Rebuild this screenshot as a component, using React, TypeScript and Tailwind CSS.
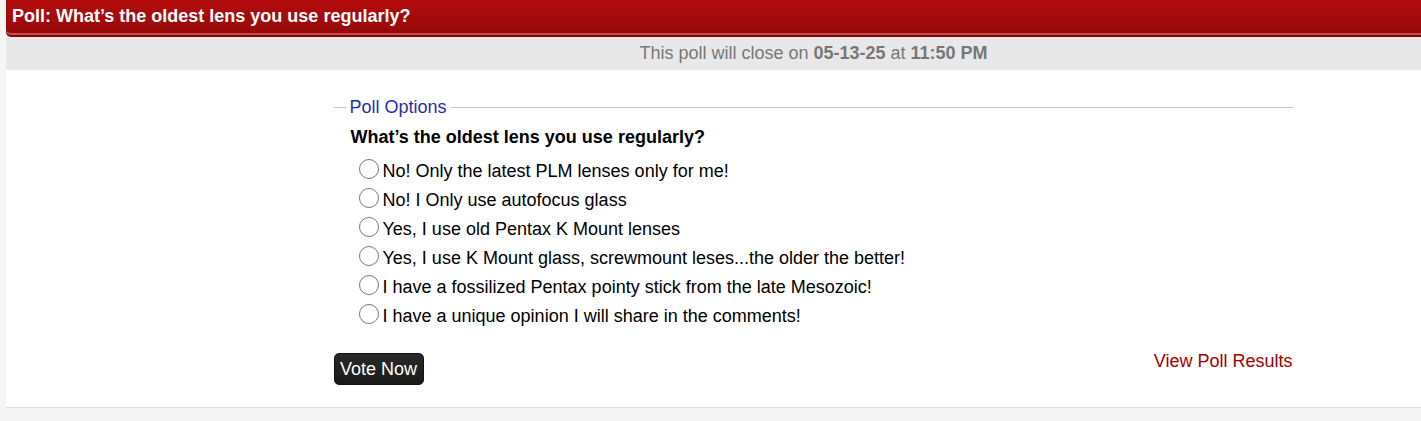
const options = [
  "No! Only the latest PLM lenses only for me!",
  "No! I Only use autofocus glass",
  "Yes, I use old Pentax K Mount lenses",
  "Yes, I use K Mount glass, screwmount leses...the older the better!",
  "I have a fossilized Pentax pointy stick from the late Mesozoic!",
  "I have a unique opinion I will share in the comments!",
];

export default function App() {
  return (
    <div className="min-h-[421px] bg-[#f5f5f5] pl-[6px] font-['Liberation_Sans',Arial,sans-serif]">
      {/* header */}
      <div className="h-[37px] rounded-bl-[5px] border-b-[2px] border-[#7a0606] bg-gradient-to-b from-[#b40c0e] to-[#940909] shadow-[inset_0_-2px_0_#c85050]">
        <h2 className="pl-[6px] pt-[6px] text-[18px] leading-[21px] font-bold text-white">
          Poll: What’s the oldest lens you use regularly?
        </h2>
      </div>
      {/* close notice */}
      <div className="h-[33px] bg-[#e8e8e8] pl-[200px] text-center text-[18px] leading-[33px] text-[#777]">
        This poll will close on <b>05-13-25</b> at <b>11:50 PM</b>
      </div>
      {/* body */}
      <div className="border-b border-[#dcdcdc] bg-white pl-[200px] pt-[27px] pb-[22px]">
        <fieldset className="mx-auto w-[960px] border-t border-[#c8c8c8] px-[12px]">
          <legend className="px-[4px] text-[18px] leading-[20px] text-[#2b2ba8]">Poll Options</legend>
          <div className="mt-[10px] pl-[5px] text-[18px] leading-[20px] font-bold text-black">
            What’s the oldest lens you use regularly?
          </div>
          <div className="mt-[10px] pl-[13px]">
            {options.map((o) => (
              <label key={o} className="flex h-[29px] items-center gap-[4px] text-[18px] text-black">
                <span className="mb-[6px] h-[20px] w-[20px] shrink-0 rounded-full border border-[#777] bg-white" />
                {o}
              </label>
            ))}
          </div>
          <div className="mt-[22px] -mx-[12px] flex items-start justify-between">
            <button className="h-[32px] w-[90px] rounded-[5px] border border-[#111] bg-gradient-to-b from-[#2a2a2a] to-[#1a1a1a] text-[18px] text-white">
              Vote Now
            </button>
            <a className="mt-[-2px] pr-[1px] text-[18px] leading-[20px] text-[#a00000]">View Poll Results</a>
          </div>
        </fieldset>
      </div>
    </div>
  );
}
